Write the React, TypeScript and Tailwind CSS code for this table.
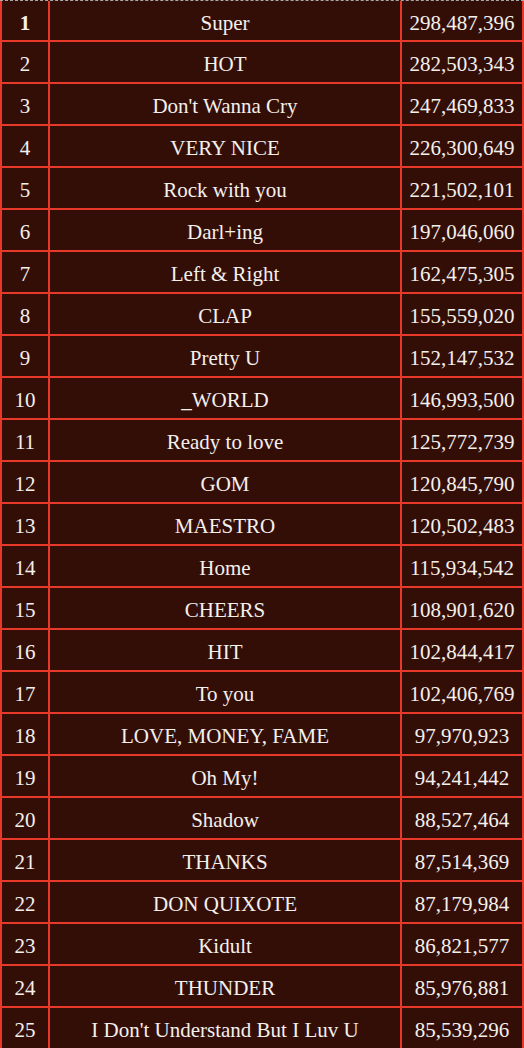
import React from 'react';

const rows: [string, string][] = [
  ['Super', '298,487,396'],
  ['HOT', '282,503,343'],
  ["Don't Wanna Cry", '247,469,833'],
  ['VERY NICE', '226,300,649'],
  ['Rock with you', '221,502,101'],
  ['Darl+ing', '197,046,060'],
  ['Left & Right', '162,475,305'],
  ['CLAP', '155,559,020'],
  ['Pretty U', '152,147,532'],
  ['_WORLD', '146,993,500'],
  ['Ready to love', '125,772,739'],
  ['GOM', '120,845,790'],
  ['MAESTRO', '120,502,483'],
  ['Home', '115,934,542'],
  ['CHEERS', '108,901,620'],
  ['HIT', '102,844,417'],
  ['To you', '102,406,769'],
  ['LOVE, MONEY, FAME', '97,970,923'],
  ['Oh My!', '94,241,442'],
  ['Shadow', '88,527,464'],
  ['THANKS', '87,514,369'],
  ['DON QUIXOTE', '87,179,984'],
  ['Kidult', '86,821,577'],
  ['THUNDER', '85,976,881'],
  ["I Don't Understand But I Luv U", '85,539,296'],
];

export default function App() {
  return (
    <div className="w-[524px] h-[1048px] overflow-hidden bg-[#330e07] border-t border-dashed border-[#a9a9a9] font-['Liberation_Serif','Times_New_Roman',serif] text-[21px] leading-none text-[#f4f0ec]">
      {rows.map(([title, views], i) => (
        <div
          key={i}
          className={`flex border-b-2 border-[#e8382a] ${i === 0 ? 'h-[41px]' : 'h-[42px]'}`}
        >
          <div className={`w-[50px] shrink-0 flex items-center justify-center pt-[5px] border-x-2 border-[#e8382a] ${i === 0 ? 'font-bold' : ''}`}>
            {i + 1}
          </div>
          <div className="w-[352px] shrink-0 flex items-center justify-center pt-[5px] border-r-2 border-[#e8382a] whitespace-nowrap">
            {title}
          </div>
          <div className="w-[122px] shrink-0 flex items-center justify-center pt-[5px] border-r-2 border-[#e8382a]">
            {views}
          </div>
        </div>
      ))}
    </div>
  );
}
